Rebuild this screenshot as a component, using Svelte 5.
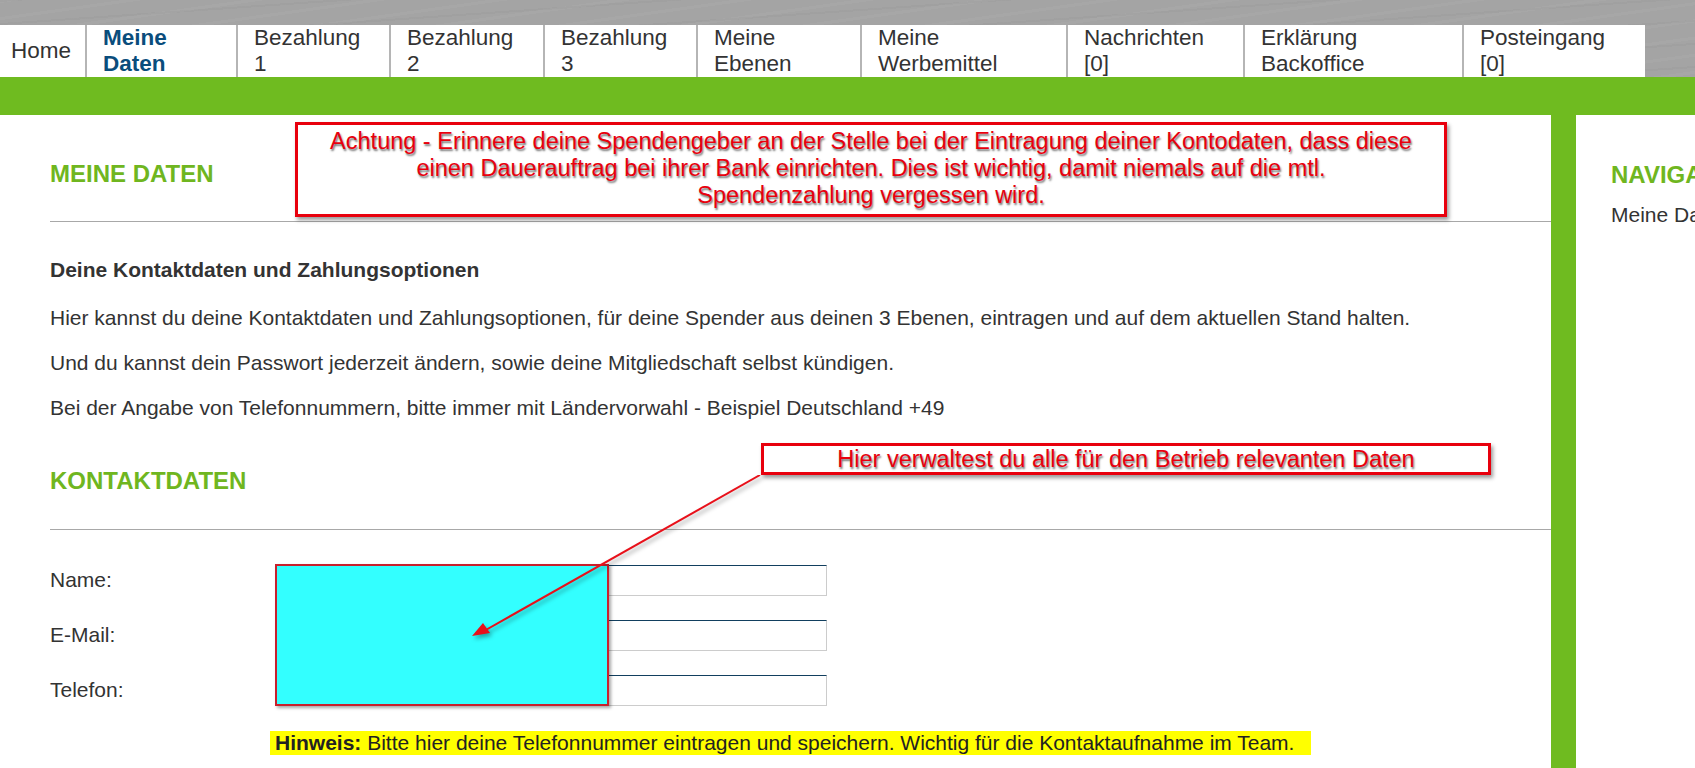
<script>
  const tabs = [
    { lines: ["Home"], width: 87, pad: 11 },
    { lines: ["Meine", "Daten"], width: 151, active: true },
    { lines: ["Bezahlung", "1"], width: 153 },
    { lines: ["Bezahlung", "2"], width: 154 },
    { lines: ["Bezahlung", "3"], width: 153 },
    { lines: ["Meine", "Ebenen"], width: 164 },
    { lines: ["Meine", "Werbemittel"], width: 206 },
    { lines: ["Nachrichten", "[0]"], width: 177 },
    { lines: ["Erklärung", "Backoffice"], width: 219 },
    { lines: ["Posteingang", "[0]"], width: 181 }
  ];

  const fields = [
    { label: "Name:" },
    { label: "E-Mail:" },
    { label: "Telefon:" }
  ];
</script>

<div class="page">
  <header class="top">
    <nav class="tabs">
      {#each tabs as tab}
        <a href="#top" class="tab" class:active={tab.active} style="width: {tab.width}px; padding-left: {tab.pad ?? 16}px">
          {#each tab.lines as line}
            <span>{line}</span>
          {/each}
        </a>
      {/each}
    </nav>
  </header>
  <div class="greenbar"></div>

  <div class="columns">
    <main class="content">
      <h2 class="first">MEINE DATEN</h2>
      <hr />
      <p class="lead"><strong>Deine Kontaktdaten und Zahlungsoptionen</strong></p>
      <p>Hier kannst du deine Kontaktdaten und Zahlungsoptionen, für deine Spender aus deinen 3 Ebenen, eintragen und auf dem aktuellen Stand halten.</p>
      <p>Und du kannst dein Passwort jederzeit ändern, sowie deine Mitgliedschaft selbst kündigen.</p>
      <p>Bei der Angabe von Telefonnummern, bitte immer mit Ländervorwahl - Beispiel Deutschland +49</p>

      <h2 class="second">KONTAKTDATEN</h2>
      <hr class="wide" />

      <form class="fields">
        {#each fields as field}
          <label class="row">
            <span>{field.label}</span>
            <input type="text" />
          </label>
        {/each}
      </form>
      <p class="hint"><strong>Hinweis:</strong> Bitte hier deine Telefonnummer eintragen und speichern. Wichtig für die Kontaktaufnahme im Team.</p>
    </main>

    <div class="divider"></div>

    <aside class="side">
      <h2>NAVIGATION</h2>
      <p>Meine Daten</p>
    </aside>
  </div>

  <div class="note note-top">
    Achtung - Erinnere deine Spendengeber an der Stelle bei der Eintragung deiner Kontodaten, dass diese<br />
    einen Dauerauftrag bei ihrer Bank einrichten. Dies ist wichtig, damit niemals auf die mtl.<br />
    Spendenzahlung vergessen wird.
  </div>
  <div class="note note-mid">Hier verwaltest du alle für den Betrieb relevanten Daten</div>
  <div class="cover"></div>

  <svg class="arrow" width="300" height="170" viewBox="0 0 300 170">
    <line x1="290" y1="0" x2="14" y2="156" stroke="#e8101a" stroke-width="2" />
    <polygon points="2,161 13,148 20,158" fill="#e8101a" />
  </svg>
</div>

<style>
  :global(body) {
    margin: 0;
    background: #fff;
    overflow: hidden;
  }

  .page {
    position: relative;
    width: 1695px;
    height: 768px;
    overflow: hidden;
    font-family: "Liberation Sans", Arial, sans-serif;
    color: #333;
    font-size: 21px;
  }

  .top {
    height: 77px;
    box-sizing: border-box;
    padding-top: 25px;
    background-color: #a4a4a4;
    background-image:
      repeating-linear-gradient(172deg, rgba(255, 255, 255, 0.035) 0 3px, transparent 3px 17px),
      repeating-linear-gradient(176deg, rgba(0, 0, 0, 0.025) 0 2px, transparent 2px 23px);
  }

  .tabs {
    display: flex;
    height: 52px;
    width: 1645px;
    background: #fff;
  }

  .tab {
    display: flex;
    flex-direction: column;
    justify-content: center;
    box-sizing: border-box;
    height: 52px;
    border-right: 2px solid #b5b5b5;
    color: #333;
    text-decoration: none;
    font-size: 22.5px;
    line-height: 26px;
  }

  .tab:last-child {
    border-right: 0;
  }

  .tab.active {
    color: #0a4d7c;
    font-weight: bold;
  }

  .greenbar {
    height: 38px;
    background: #6fbb20;
  }

  .columns {
    display: flex;
    height: 653px;
  }

  .content {
    width: 1551px;
    flex: none;
    box-sizing: border-box;
    padding-left: 50px;
  }

  .divider {
    width: 25px;
    flex: none;
    background: #6fbb20;
  }

  .side {
    flex: 1;
    padding: 47px 0 0 35px;
    white-space: nowrap;
    overflow: hidden;
  }

  h2 {
    margin: 0;
    color: #6fb620;
    font-size: 24px;
    line-height: 26px;
    font-weight: bold;
  }

  h2.first {
    padding-top: 46px;
  }

  h2.second {
    padding-top: 38px;
  }

  hr {
    margin: 34px 0 0;
    border: 0;
    border-top: 1px solid #a8a8a8;
  }

  hr.wide {
    margin-top: 35px;
  }

  p {
    margin: 0;
    height: 45px;
    line-height: 45px;
  }

  p.lead {
    margin-top: 25px;
    margin-bottom: 3px;
  }

  .side p {
    margin-top: 4px;
  }

  .fields {
    display: flex;
    flex-direction: column;
    gap: 24px;
    margin-top: 35px;
  }

  .row {
    display: flex;
    align-items: center;
    height: 31px;
  }

  .row span {
    width: 225px;
    flex: none;
    margin-bottom: 2px;
  }

  input {
    width: 552px;
    height: 31px;
    box-sizing: border-box;
    padding: 0;
    border: 1px solid #ccc;
    border-top-color: #123f5f;
    background: #fff;
  }

  .hint {
    margin: 25px 0 0 220px;
    width: 1041px;
    height: 24px;
    line-height: 23px;
    padding-left: 5px;
    box-sizing: border-box;
    background: #ff0;
    color: #222;
    white-space: nowrap;
  }

  .note {
    position: absolute;
    box-sizing: border-box;
    border: 3px solid #e8000d;
    background: #fff;
    color: #e8000d;
    text-align: center;
    font-size: 23.5px;
    line-height: 27px;
    text-shadow: 1px 2px 2px rgba(0, 0, 0, 0.55);
    box-shadow: 2px 3px 4px rgba(0, 0, 0, 0.4);
  }

  .note-top {
    left: 295px;
    top: 122px;
    width: 1152px;
    height: 95px;
    padding-top: 3px;
  }

  .note-mid {
    left: 761px;
    top: 443px;
    width: 730px;
    height: 32px;
  }

  .cover {
    position: absolute;
    left: 275px;
    top: 564px;
    width: 334px;
    height: 142px;
    box-sizing: border-box;
    border: 2px solid #c8202c;
    background: #3ff;
    box-shadow: 2px 2px 3px rgba(0, 0, 0, 0.35);
  }

  .arrow {
    position: absolute;
    left: 470px;
    top: 475px;
    pointer-events: none;
    filter: drop-shadow(2px 3px 2px rgba(0, 0, 0, 0.35));
  }
</style>
